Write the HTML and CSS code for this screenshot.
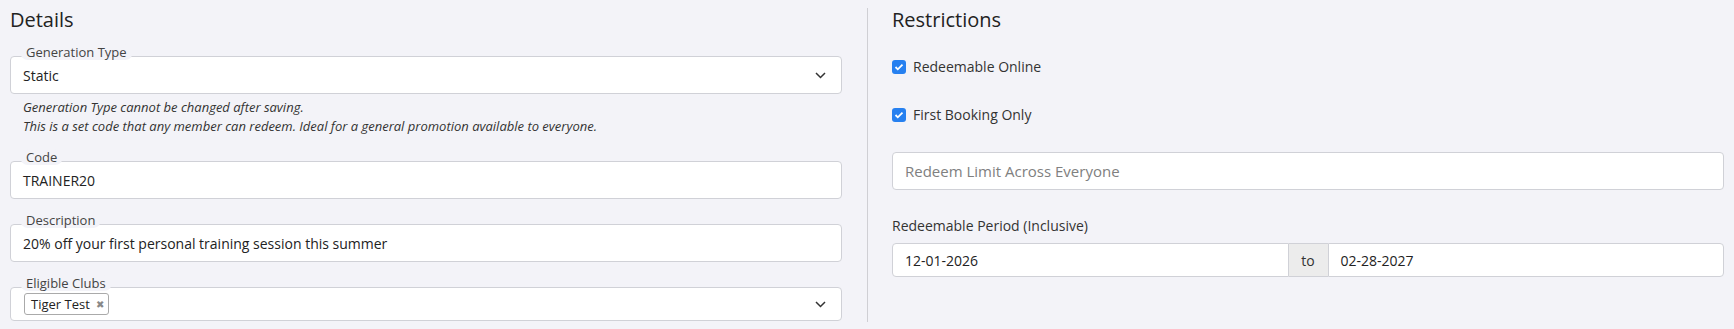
FILE: index.html
```html
<!DOCTYPE html>
<html lang="en">
<head>
  <meta charset="UTF-8" />
  <meta name="viewport" content="width=device-width, initial-scale=1.0" />
  <title>Promo Code</title>
  <link rel="stylesheet" href="styles.css">
</head>
<body>
  <div class="page">
    <!-- Details column -->
    <div class="col col-left">
      <h2 class="section-title">Details</h2>

      <div class="field field-first">
        <span class="field-label">Generation Type</span>
        <div class="box select">
          <span>Static</span>
          <svg class="chevron" width="11" height="7" viewBox="0 0 11 7"><path d="M1 1l4.5 4.5L10 1" fill="none" stroke="#333" stroke-width="1.5"/></svg>
        </div>
      </div>
      <div class="help">
        <div>Generation Type cannot be changed after saving.</div>
        <div>This is a set code that any member can redeem. Ideal for a general promotion available to everyone.</div>
      </div>

      <div class="field field-code">
        <span class="field-label">Code</span>
        <div class="box">TRAINER20</div>
      </div>

      <div class="field">
        <span class="field-label">Description</span>
        <div class="box">20% off your first personal training session this summer</div>
      </div>

      <div class="field">
        <span class="field-label">Eligible Clubs</span>
        <div class="box select multi">
          <span class="tag">Tiger Test <span class="tag-x">&#10006;</span></span>
          <svg class="chevron" width="11" height="7" viewBox="0 0 11 7"><path d="M1 1l4.5 4.5L10 1" fill="none" stroke="#333" stroke-width="1.5"/></svg>
        </div>
      </div>
    </div>

    <!-- Restrictions column -->
    <div class="col col-right">
      <h2 class="section-title">Restrictions</h2>

      <label class="check check-first">
        <span class="checkbox"><svg width="10" height="8" viewBox="0 0 10 8"><path d="M1.5 4l2.3 2.3L8.5 1.7" fill="none" stroke="#fff" stroke-width="1.8"/></svg></span>
        Redeemable Online
      </label>
      <label class="check check-second">
        <span class="checkbox"><svg width="10" height="8" viewBox="0 0 10 8"><path d="M1.5 4l2.3 2.3L8.5 1.7" fill="none" stroke="#fff" stroke-width="1.8"/></svg></span>
        First Booking Only
      </label>

      <div class="box limit placeholder">Redeem Limit Across Everyone</div>

      <div class="period-label">Redeemable Period (Inclusive)</div>
      <div class="range">
        <div class="range-input">12-01-2026</div>
        <div class="range-to">to</div>
        <div class="range-input">02-28-2027</div>
      </div>
    </div>
  </div>
</body>
</html>
```

FILE: styles.css
```css
/* Base */
* {
  margin: 0;
  padding: 0;
  box-sizing: border-box;
}
html, body {
  background: #f3f3f8;
  font-family: 'Open Sans', sans-serif;
  color: #333;
}
.page {
  display: grid;
  grid-template-columns: 1fr 1fr;
  padding: 8px 10px 0;
}
.col {
  display: flex;
  flex-direction: column;
}
.col-left {
  padding-right: 25px;
  padding-bottom: 1px;
}
.col-right {
  border-left: 1px solid #cfcfd4;
  padding-left: 24px;
}
.section-title {
  font-size: 20px;
  font-weight: 400;
  line-height: 24px;
  color: #222;
}

/* Floating-label fields */
.field {
  position: relative;
  margin-top: 25px;
}
.field-first {
  margin-top: 24px;
}
.field-code {
  margin-top: 25px;
}
.field-label {
  position: absolute;
  top: -12px;
  left: 10px;
  padding: 0 6px;
  font-size: 13px;
  line-height: 16px;
  color: #444;
  background: #f3f3f8;
  border-radius: 8px;
}
.box {
  height: 38px;
  display: flex;
  align-items: center;
  padding: 0 12px;
  background: #fff;
  border: 1px solid #d0d1d7;
  border-radius: 4px;
  font-size: 14px;
  color: #222;
}
.select {
  justify-content: space-between;
}
.chevron {
  margin-right: 3px;
}
.multi {
  height: 34px;
}
.tag {
  display: inline-flex;
  align-items: center;
  height: 22px;
  padding: 0 4px 0 6px;
  margin-left: 1px;
  border: 1px solid #aaa;
  border-radius: 3px;
  font-size: 13px;
  color: #222;
}
.tag-x {
  margin-left: 6px;
  font-size: 10px;
  color: #888;
}
.help {
  margin-top: 4px;
  padding-left: 13px;
  font-size: 13px;
  font-style: italic;
  line-height: 19px;
  color: #333;
}

/* Restrictions */
.check {
  display: flex;
  align-items: center;
  gap: 7px;
  font-size: 14px;
  line-height: 20px;
  color: #333;
}
.check-first {
  margin-top: 25px;
}
.check-second {
  margin-top: 28px;
}
.checkbox {
  width: 14px;
  height: 14px;
  border-radius: 3px;
  background: #2680f0;
  display: flex;
  align-items: center;
  justify-content: center;
}
.limit {
  margin-top: 27px;
  font-size: 15px;
}
.placeholder {
  color: #808080;
}
.period-label {
  margin-top: 26px;
  font-size: 14px;
  line-height: 20px;
  color: #333;
}
.range {
  display: flex;
  margin-top: 7px;
  height: 34px;
}
.range-input {
  flex: 1;
  display: flex;
  align-items: center;
  padding: 0 12px;
  background: #fff;
  border: 1px solid #d0d1d7;
  font-size: 14px;
  color: #222;
}
.range-input:first-child {
  border-radius: 4px 0 0 4px;
}
.range-input:last-child {
  border-radius: 0 4px 4px 0;
}
.range-to {
  width: 39px;
  display: flex;
  align-items: center;
  justify-content: center;
  background: #ececec;
  border-top: 1px solid #d0d1d7;
  border-bottom: 1px solid #d0d1d7;
  font-size: 14px;
  color: #333;
}
```
